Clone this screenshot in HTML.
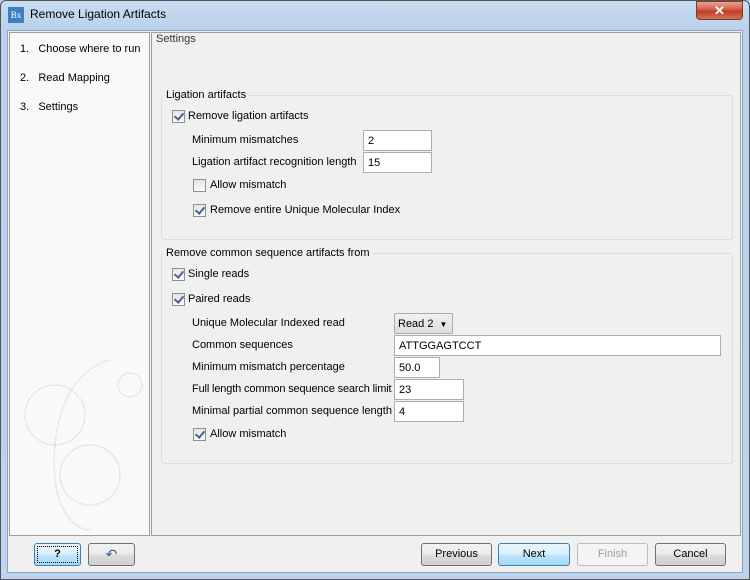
<!DOCTYPE html>
<html><head><style>
*{box-sizing:border-box;margin:0;padding:0}
body{width:750px;height:580px;position:relative;overflow:hidden;font-family:"Liberation Sans",sans-serif;font-size:11px;color:#000;background:#bcd3ec}
.a{position:absolute;white-space:nowrap}
.t{margin-top:1px}
.frame{left:0;top:0;width:750px;height:580px;border:1px solid #555;border-radius:6px 6px 0 0;background:linear-gradient(180deg,#c9dcf1 0,#b9d1ec 30px,#bdd4ee 100%)}
.inner{left:7px;top:30px;width:736px;height:543px;background:#f0f0f0;border:1px solid #8ea3bd}
.left{left:9px;top:32px;width:141px;height:504px;background:#f9f9f9;border:1px solid #a0a0a0}
.right{left:151px;top:32px;width:590px;height:504px;background:#f0f0f0;border:1px solid #a0a0a0}
.grp{border:1px solid #d5dfe5;border-radius:3px}
.lg{background:#f0f0f0;padding:0 2px}
.cb{width:13px;height:13px;border:1px solid #8f8f8f;background:linear-gradient(#e6e6e6,#fafafa)}
.cb.c::after{content:"";position:absolute;left:3px;top:0px;width:4px;height:7px;border:solid #4a5f97;border-width:0 2px 2px 0;transform:rotate(40deg)}
.in{height:21px;border:1px solid #abadb3;background:#fff;padding:4px 4px;font-size:11px}
.btn{height:23px;border:1px solid #707070;border-radius:3px;background:linear-gradient(#f2f2f2 0,#ebebeb 50%,#dddddd 51%,#cfcfcf 100%);text-align:center;line-height:21px}
</style></head><body>
<div class="a frame"></div>
<div class="a" style="left:8px;top:7px;width:16px;height:16px;background:#3d7fc1;color:#fff;font-size:9px;line-height:16px;text-align:center;font-family:'Liberation Serif',serif">Bx</div>
<div class="a" style="left:30px;top:7px;font-size:12px">Remove Ligation Artifacts</div>
<div class="a" style="left:696px;top:1px;width:47px;height:19px;border:1px solid #7a3a30;border-radius:0 0 4px 4px;background:linear-gradient(#e8a595,#d0533d 50%,#c23a22 51%,#d2705a);color:#fff;font-weight:bold;text-align:center;line-height:17px;font-size:13px">✕</div>
<div class="a inner"></div>
<div class="a left"></div>
<svg class="a" style="left:10px;top:340px" width="139" height="195" viewBox="0 0 139 195" fill="none" stroke="#d6d6d6" stroke-width="1.5" stroke-dasharray="1 1">
<circle cx="45" cy="75" r="30"/><circle cx="80" cy="135" r="30"/><path d="M100 20 C60 30 40 80 45 140 C50 180 70 190 80 190"/><circle cx="120" cy="45" r="12"/>
</svg>
<div class="a" style="left:20px;top:43px">1.&nbsp;&nbsp;&nbsp;Choose where to run</div>
<div class="a" style="left:20px;top:72px">2.&nbsp;&nbsp;&nbsp;Read Mapping</div>
<div class="a" style="left:20px;top:101px">3.&nbsp;&nbsp;&nbsp;Settings</div>
<div class="a right"></div>
<div class="a" style="left:156px;top:33px;color:#333">Settings</div>

<div class="a grp" style="left:161px;top:95px;width:572px;height:145px"></div>
<div class="a lg" style="left:164px;top:89px">Ligation artifacts</div>
<div class="a cb c" style="left:172px;top:110px"></div><div class="a" style="left:188px;top:110px">Remove ligation artifacts</div>
<div class="a" style="left:192px;top:134px">Minimum mismatches</div><div class="a in" style="left:363px;top:130px;width:69px">2</div>
<div class="a" style="left:192px;top:156px">Ligation artifact recognition length</div><div class="a in" style="left:363px;top:152px;width:69px">15</div>
<div class="a cb" style="left:193px;top:179px"></div><div class="a" style="left:210px;top:179px">Allow mismatch</div>
<div class="a cb c" style="left:193px;top:204px"></div><div class="a" style="left:210px;top:204px">Remove entire Unique Molecular Index</div>

<div class="a grp" style="left:161px;top:253px;width:572px;height:211px"></div>
<div class="a lg" style="left:164px;top:247px">Remove common sequence artifacts from</div>
<div class="a cb c" style="left:172px;top:268px"></div><div class="a" style="left:188px;top:268px">Single reads</div>
<div class="a cb c" style="left:172px;top:293px"></div><div class="a" style="left:188px;top:293px">Paired reads</div>
<div class="a" style="left:192px;top:317px">Unique Molecular Indexed read</div>
<div class="a" style="left:394px;top:313px;width:59px;height:21px;border:1px solid #acacac;border-radius:2px;background:linear-gradient(#f2f2f2,#dcdcdc);padding:4px 3px">Read 2 <span style="font-size:8px;margin-left:3px">▼</span></div>
<div class="a" style="left:192px;top:339px">Common sequences</div><div class="a in" style="left:394px;top:335px;width:327px">ATTGGAGTCCT</div>
<div class="a" style="left:192px;top:361px">Minimum mismatch percentage</div><div class="a in" style="left:394px;top:357px;width:46px">50.0</div>
<div class="a" style="left:192px;top:383px;letter-spacing:-0.15px">Full length common sequence search limit</div><div class="a in" style="left:394px;top:379px;width:70px">23</div>
<div class="a" style="left:192px;top:405px">Minimal partial common sequence length</div><div class="a in" style="left:394px;top:401px;width:70px">4</div>
<div class="a cb c" style="left:193px;top:428px"></div><div class="a" style="left:210px;top:428px">Allow mismatch</div>

<div class="a btn" style="left:34px;top:543px;width:47px;border-color:#3c7fb1;background:linear-gradient(#eaf6fd,#d9f0fc 50%,#bee6fd 51%,#a7d9f5);font-weight:bold;outline:1px dotted #000;outline-offset:-4px">?</div>
<div class="a btn" style="left:88px;top:543px;width:47px;color:#3a5a9a;font-size:14px">↶</div>
<div class="a btn" style="left:421px;top:543px;width:71px">Previous</div>
<div class="a btn" style="left:498px;top:543px;width:72px;border-color:#3c7fb1;background:linear-gradient(#eaf6fd,#d9f0fc 50%,#bee6fd 51%,#a7d9f5)">Next</div>
<div class="a btn" style="left:577px;top:543px;width:71px;border-color:#bcbcbc;background:#f4f4f4;color:#9d9d9d">Finish</div>
<div class="a btn" style="left:655px;top:543px;width:71px">Cancel</div>
</body></html>
